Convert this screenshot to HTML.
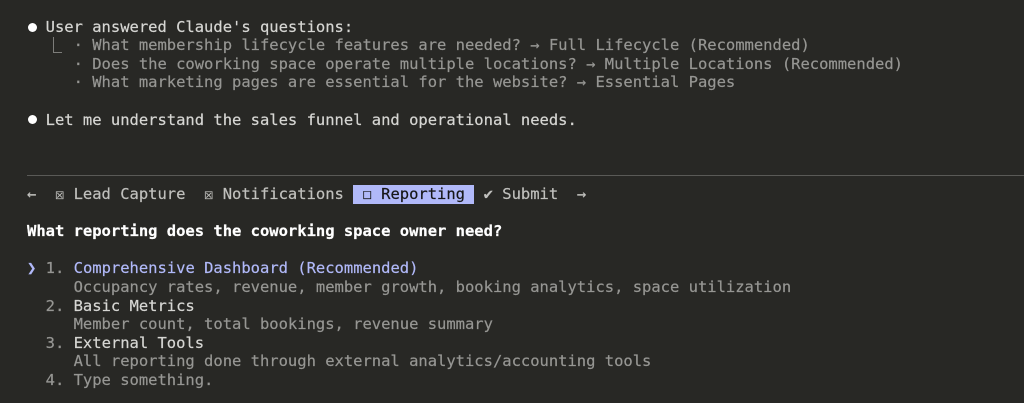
<!DOCTYPE html>
<html>
<head>
<meta charset="utf-8">
<style>
html,body{margin:0;padding:0;background:#282825;}
body{width:1024px;height:403px;overflow:hidden;position:relative;font-family:"DejaVu Sans Mono","Liberation Mono",monospace;font-size:15.5px;color:#c8c8c5;}
.wrap{position:absolute;left:0;top:0;width:1024px;height:403px;filter:blur(0.25px);}
.l{position:absolute;left:27px;white-space:pre;line-height:18.6px;height:18.6px;letter-spacing:-0.013px;-webkit-text-stroke:0.2px currentColor;}
.g{color:#969693;}
.w{color:#d6d6d3;}
.m{color:#c0c0bd;}
.b{color:#fff;font-weight:bold;}
.p{color:#b1b9f9;}
.hl{position:absolute;left:353px;top:184.5px;width:121px;height:19px;background:#b1b9f9;}
.k{color:#161616;}
.dot{position:absolute;left:27.5px;width:9px;height:9px;border-radius:50%;background:#fff;}
.sep{position:absolute;left:27px;right:0;top:175px;height:1px;background:#5a5a57;}
.cor{position:absolute;left:53px;top:37px;width:9px;height:16px;border-left:1px solid #7d7d7a;border-bottom:1px solid #7d7d7a;box-sizing:border-box;}
</style>
</head>
<body>
<div class="wrap">
<div class="dot" style="top:22.5px"></div>
<div class="l w" style="top:17.5px">  User answered Claude's questions:</div>
<div class="cor"></div>
<div class="l g" style="top:36.1px">     · What membership lifecycle features are needed? → Full Lifecycle (Recommended)</div>
<div class="l g" style="top:54.7px">     · Does the coworking space operate multiple locations? → Multiple Locations (Recommended)</div>
<div class="l g" style="top:73.3px">     · What marketing pages are essential for the website? → Essential Pages</div>
<div class="dot" style="top:115px"></div>
<div class="l w" style="top:110.5px">  Let me understand the sales funnel and operational needs.</div>
<div class="sep"></div>
<div class="hl"></div>
<div class="l m" style="top:184.9px">←  ☒ Lead Capture  ☒ Notifications  <span class="k">☐ Reporting</span>  ✔ Submit  →</div>
<div class="l b" style="top:222.1px">What reporting does the coworking space owner need?</div>
<div class="l" style="top:259.3px"><span class="p">❯</span> <span class="g">1.</span> <span class="p">Comprehensive Dashboard (Recommended)</span></div>
<div class="l g" style="top:277.9px">     Occupancy rates, revenue, member growth, booking analytics, space utilization</div>
<div class="l" style="top:296.5px">  <span class="g">2.</span> <span class="w">Basic Metrics</span></div>
<div class="l g" style="top:315.1px">     Member count, total bookings, revenue summary</div>
<div class="l" style="top:333.7px">  <span class="g">3.</span> <span class="w">External Tools</span></div>
<div class="l g" style="top:352.3px">     All reporting done through external analytics/accounting tools</div>
<div class="l g" style="top:370.9px">  4. Type something.</div>
</div>
</body>
</html>
